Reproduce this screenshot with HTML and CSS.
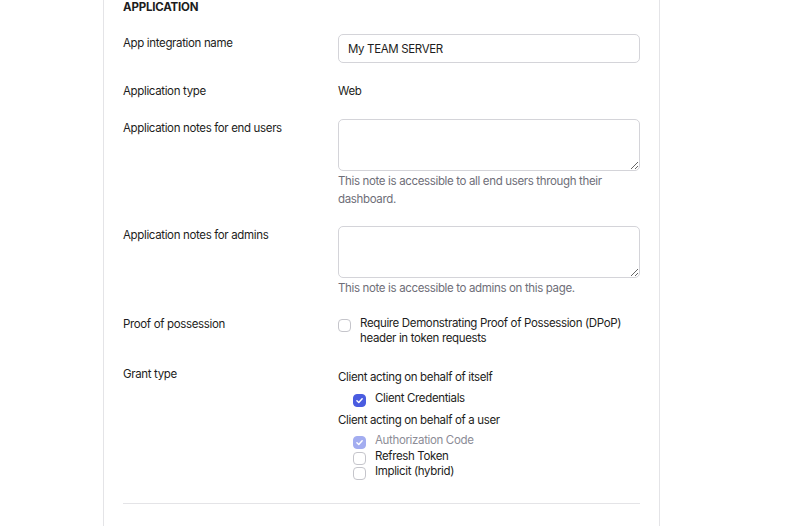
FILE: index.html
```html
<!DOCTYPE html>
<html>
<head>
<meta charset="utf-8">
<link rel="stylesheet" href="styles.css">
</head>
<body>
<div class="panel">
  <h2 class="heading">APPLICATION</h2>
  <div class="row">
    <div class="label">App integration name</div>
    <div class="field"><input class="text-input" type="text" value="My TEAM SERVER"></div>
  </div>
  <div class="row">
    <div class="label">Application type</div>
    <div class="field plain">Web</div>
  </div>
  <div class="row tight">
    <div class="label">Application notes for end users</div>
    <div class="field">
      <textarea class="notes"></textarea>
      <div class="help">This note is accessible to all end users through their dashboard.</div>
    </div>
  </div>
  <div class="row tight">
    <div class="label">Application notes for admins</div>
    <div class="field">
      <textarea class="notes"></textarea>
      <div class="help">This note is accessible to admins on this page.</div>
    </div>
  </div>
  <div class="row tight">
    <div class="label">Proof of possession</div>
    <div class="field">
      <label class="check wrap"><span class="box"></span><span>Require Demonstrating Proof of Possession (DPoP) header in token requests</span></label>
    </div>
  </div>
  <div class="row">
    <div class="label">Grant type</div>
    <div class="field grants">
      <div class="group-title">Client acting on behalf of itself</div>
      <ul class="options first">
        <li class="check"><span class="box checked"><svg viewBox="0 0 12 12"><path d="M3.2 6.2 L5.2 8.1 L8.9 4.1" fill="none" stroke="#fff" stroke-width="1.6" stroke-linecap="round" stroke-linejoin="round"/></svg></span><span>Client Credentials</span></li>
      </ul>
      <div class="group-title">Client acting on behalf of a user</div>
      <ul class="options">
        <li class="check disabled"><span class="box checked"><svg viewBox="0 0 12 12"><path d="M3.2 6.2 L5.2 8.1 L8.9 4.1" fill="none" stroke="#fff" stroke-width="1.6" stroke-linecap="round" stroke-linejoin="round"/></svg></span><span>Authorization Code</span></li>
        <li class="check"><span class="box"></span><span>Refresh Token</span></li>
        <li class="check"><span class="box"></span><span>Implicit (hybrid)</span></li>
      </ul>
    </div>
  </div>
  <div class="divider"></div>
</div>
</body>
</html>
```
FILE: styles.css
```css
* { box-sizing: border-box; }
html, body { margin: 0; padding: 0; background: #fff; }
body {
  font-family: "Inter", "Noto Sans", sans-serif;
  font-size: 11.5px;
  letter-spacing: -0.35px;
  color: #1d1d21;
  overflow: hidden;
}
.panel {
  margin-left: 103px;
  width: 557px;
  height: 540px;
  border-left: 1px solid #e4e4e7;
  border-right: 1px solid #e4e4e7;
  padding: 0 19px;
}
.heading {
  margin: -1px 0 19px;
  font-size: 11.5px;
  font-weight: 700;
  line-height: 16px;
  letter-spacing: -0.2px;
}
.row {
  display: grid;
  grid-template-columns: 215px 302px;
  margin-bottom: 19px;
}
.row.tight { margin-bottom: 18px; }
.label { line-height: 18px; }
.field { line-height: 18px; }
.text-input {
  display: block;
  width: 302px;
  height: 29px;
  border: 1px solid #d4d4d9;
  border-radius: 5px;
  padding: 0 9px;
  font: inherit;
  letter-spacing: -0.35px;
  color: #1d1d21;
  margin: 0;
}
.notes {
  display: block;
  width: 302px;
  height: 52px;
  border: 1px solid #d4d4d9;
  border-radius: 5px;
  font: inherit;
  margin: 0;
}
.help {
  color: #6e6e78;
  line-height: 18px;
  margin-top: 1px;
}
.check {
  display: flex;
  align-items: flex-start;
  gap: 9px;
  line-height: 15.5px;
}
.wrap { padding-top: 0.5px; }
.box {
  flex: none;
  width: 13px;
  height: 13px;
  border: 1px solid #c5c5cb;
  border-radius: 4px;
  margin-top: 3px;
  background: #fff;
}
.box.checked {
  background: #4a5ce0;
  border-color: #4a5ce0;
}
.box svg { display: block; width: 11px; height: 11px; }
.disabled { color: #8c8c96; }
.disabled .box.checked { background: #a3adf0; border-color: #a3adf0; }
.grants { padding-top: 3px; }
.group-title { line-height: 18px; }
.options {
  list-style: none;
  margin: 0;
  padding: 4px 0 4px 15px;
}
.options.first { padding-top: 5px; padding-bottom: 5px; }
.options .check { height: 15.5px; }
.divider {
  border-top: 1px solid #e4e4e7;
  margin-top: 0;
}
```
